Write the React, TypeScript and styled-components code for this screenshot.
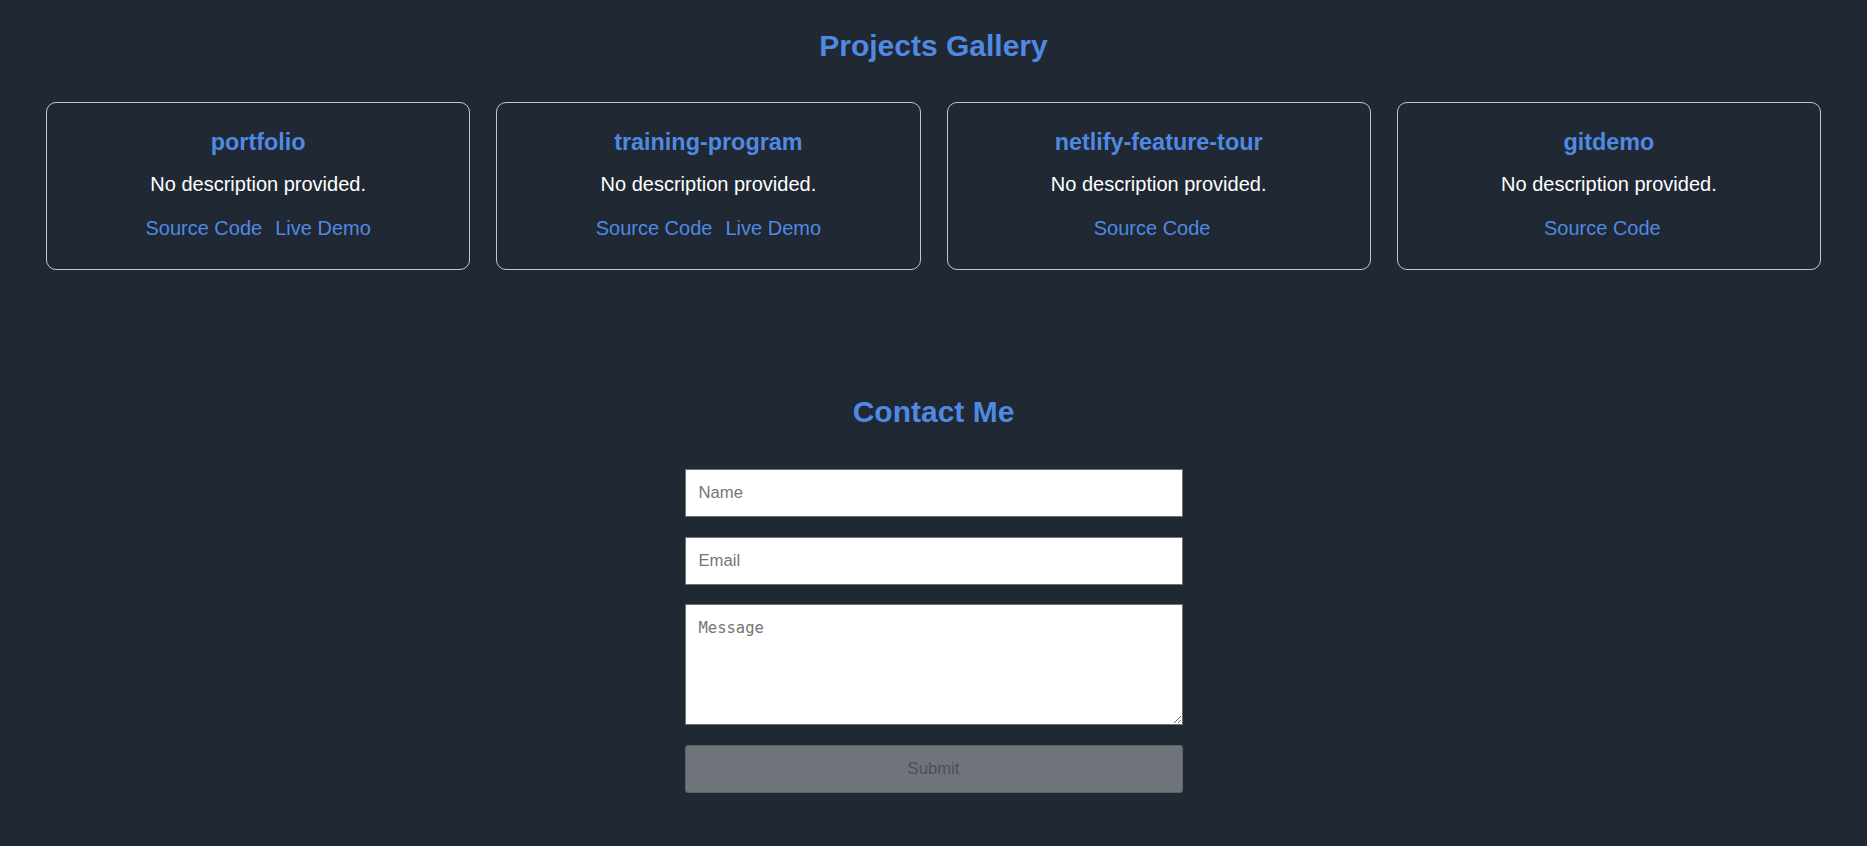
import React from 'react'
import styled, { createGlobalStyle } from 'styled-components'

const projects = [
  { name: 'portfolio', demo: true },
  { name: 'training-program', demo: true },
  { name: 'netlify-feature-tour', demo: false },
  { name: 'gitdemo', demo: false },
]

const App: React.FC = () => {
  return (
    <>
      <GlobalStyle />
      <StyledPage>
        <StyledSection>
          <StyledHeading>Projects Gallery</StyledHeading>
          <StyledGrid>
            {projects.map((p) => (
              <StyledCard key={p.name}>
                <StyledCardTitle>{p.name}</StyledCardTitle>
                <StyledCardText>No description provided.</StyledCardText>
                <StyledLinks $single={!p.demo}>
                  <StyledLink href="#">Source Code</StyledLink>
                  {p.demo && <StyledLink href="#">Live Demo</StyledLink>}
                </StyledLinks>
              </StyledCard>
            ))}
          </StyledGrid>
        </StyledSection>

        <StyledContact>
          <StyledHeading>Contact Me</StyledHeading>
          <StyledForm onSubmit={(e) => e.preventDefault()}>
            <StyledInput type="text" placeholder="Name" />
            <StyledInput type="email" placeholder="Email" />
            <StyledTextarea placeholder="Message" />
            <StyledSubmit type="submit" disabled>
              Submit
            </StyledSubmit>
          </StyledForm>
        </StyledContact>
      </StyledPage>
    </>
  )
}

const GlobalStyle = createGlobalStyle`
  html, body {
    margin: 0;
    padding: 0;
    background: #1f2833;
  }
  body {
    font-family: "Liberation Sans", Arial, sans-serif;
    color: #ffffff;
  }
`
const StyledPage = styled.div`
  min-height: 846px;
  background: #1f2833;
  padding-top: 29px;
  box-sizing: border-box;
`
const StyledSection = styled.section`
  padding: 0 46px;
`
const StyledHeading = styled.h2`
  margin: 0;
  text-align: center;
  font-size: 30px;
  line-height: 34px;
  font-weight: bold;
  color: #5089e2;
`
const StyledGrid = styled.div`
  margin-top: 39px;
  display: grid;
  grid-template-columns: repeat(4, 1fr);
  gap: 26px;
`
const StyledCard = styled.div`
  height: 168px;
  box-sizing: border-box;
  border: 1px solid #c4c8cd;
  border-radius: 10px;
  padding: 26px 20px 0;
  display: flex;
  flex-direction: column;
  align-items: center;
`
const StyledCardTitle = styled.h3`
  margin: 0;
  font-size: 23.4px;
  line-height: 27px;
  font-weight: bold;
  color: #5089e2;
`
const StyledCardText = styled.p`
  margin: 17px 0 0;
  font-size: 20px;
  line-height: 23px;
  color: #ffffff;
`
const StyledLinks = styled.div<{ $single?: boolean }>`
  margin-top: 21px;
  display: flex;
  gap: 13px;
  padding-right: ${(p) => (p.$single ? '13px' : '0')};
`
const StyledLink = styled.a`
  font-size: 20px;
  line-height: 23px;
  color: #5089e2;
  text-decoration: none;
`
const StyledContact = styled.section`
  margin-top: 125px;
  padding-bottom: 53px;
`
const StyledForm = styled.form`
  width: 498px;
  margin: 40px auto 0;
  display: flex;
  flex-direction: column;
  gap: 19.5px;
`
const StyledInput = styled.input`
  height: 48px;
  box-sizing: border-box;
  padding: 0 13px;
  border: 1px solid #6f7275;
  background: #ffffff;
  font-family: "Liberation Sans", Arial, sans-serif;
  font-size: 16.67px;
  color: #222;
  outline: none;
  &::placeholder {
    color: #757575;
  }
`
const StyledTextarea = styled.textarea`
  height: 121px;
  box-sizing: border-box;
  padding: 14px 13px;
  border: 1px solid #6f7275;
  background: #ffffff;
  font-family: "DejaVu Sans Mono", "Liberation Mono", monospace;
  font-size: 15.5px;
  color: #222;
  outline: none;
  resize: vertical;
  &::placeholder {
    color: #757575;
  }
`
const StyledSubmit = styled.button`
  height: 48px;
  border: 1px solid #5f646b;
  border-radius: 3px;
  background: #6f747b;
  color: #4b5057;
  font-family: "Liberation Sans", Arial, sans-serif;
  font-size: 16.67px;
  cursor: not-allowed;
`

export default App
